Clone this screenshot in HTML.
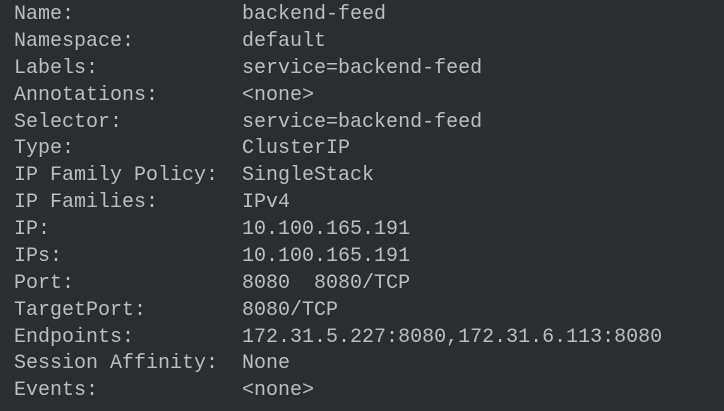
<!DOCTYPE html>
<html><head><style>
html,body{margin:0;padding:0;background:#2b2d30;width:724px;height:411px;overflow:hidden}
pre{margin:0;position:absolute;left:14px;top:2px;font-family:"Liberation Mono",monospace;font-size:20px;line-height:26.87px;color:#bcbec4}
</style></head><body>
<pre>Name:              backend-feed
Namespace:         default
Labels:            service=backend-feed
Annotations:       &lt;none&gt;
Selector:          service=backend-feed
Type:              ClusterIP
IP Family Policy:  SingleStack
IP Families:       IPv4
IP:                10.100.165.191
IPs:               10.100.165.191
Port:              8080  8080/TCP
TargetPort:        8080/TCP
Endpoints:         172.31.5.227:8080,172.31.6.113:8080
Session Affinity:  None
Events:            &lt;none&gt;</pre>
</body></html>
